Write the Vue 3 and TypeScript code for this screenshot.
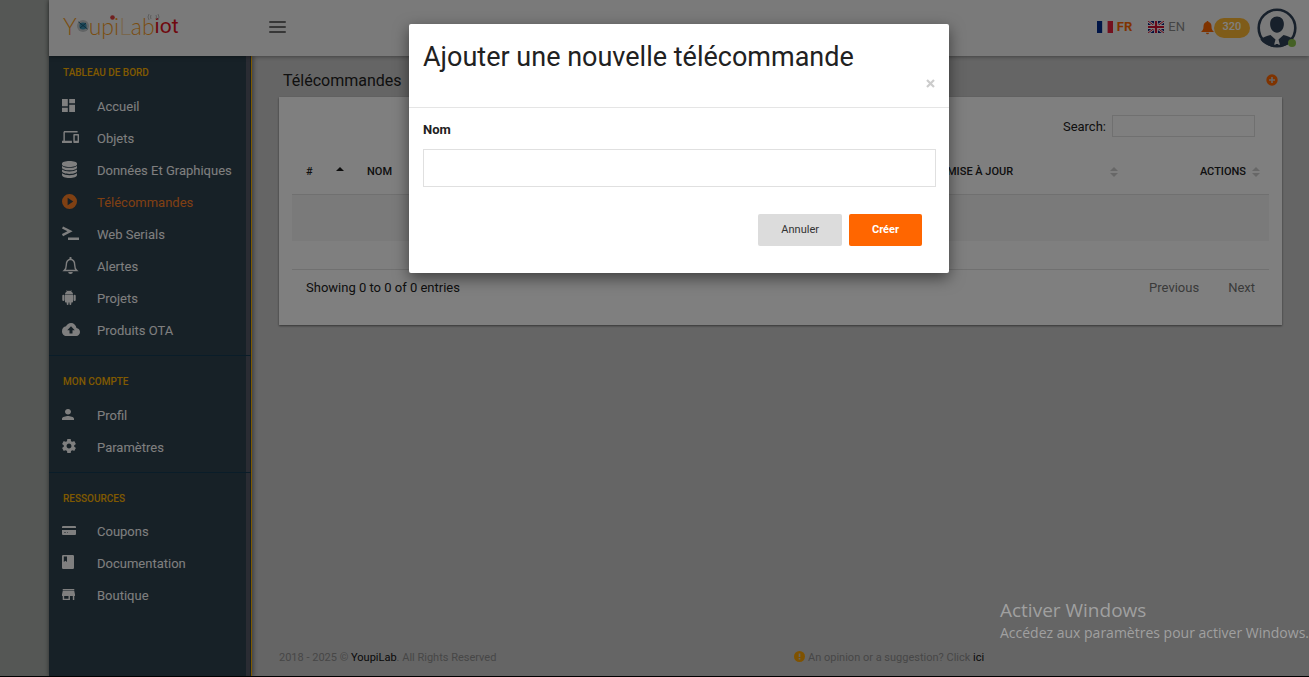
<script setup lang="ts">
import { ref } from 'vue'

interface Shape {
  d: string
  even?: boolean
  line?: number
}
interface Item {
  label: string
  w: number
  h: number
  box: string
  shapes: Shape[]
  active?: boolean
}
interface Section {
  title: string
  items: Item[]
}

const gear =
  'M19.43 12.98c.04-.32.07-.64.07-.98s-.03-.66-.07-.98l2.11-1.65c.19-.15.24-.42.12-.64l-2-3.46c-.12-.22-.39-.3-.61-.22l-2.49 1c-.52-.4-1.08-.73-1.69-.98l-.38-2.65C14.46 2.18 14.25 2 14 2h-4c-.25 0-.46.18-.49.42l-.38 2.65c-.61.25-1.17.59-1.69.98l-2.49-1c-.23-.09-.49 0-.61.22l-2 3.46c-.13.22-.07.49.12.64l2.11 1.65c-.04.32-.07.65-.07.98s.03.66.07.98l-2.11 1.65c-.19.15-.24.42-.12.64l2 3.46c.12.22.39.3.61.22l2.49-1c.52.4 1.08.73 1.69.98l.38 2.65c.03.24.24.42.49.42h4c.25 0 .46-.18.49-.42l.38-2.65c.61-.25 1.17-.59 1.69-.98l2.49 1c.23.09.49 0 .61-.22l2-3.46c.12-.22.07-.49-.12-.64l-2.11-1.65zM12 15.5c-1.93 0-3.5-1.57-3.5-3.5s1.57-3.5 3.5-3.5 3.5 1.57 3.5 3.5-1.57 3.5-3.5 3.5z'

const sections: Section[] = [
  {
    title: 'Tableau de bord',
    items: [
      {
        label: 'Accueil', w: 13, h: 13, box: '3 3 18 18',
        shapes: [{ d: 'M3 13h8V3H3v10zm0 8h8v-6H3v6zm10 0h8V11h-8v10zm0-18v6h8V3h-8z' }],
      },
      {
        label: 'Objets', w: 17, h: 12, box: '0 4 24 16',
        shapes: [{ d: 'M4 6h18V4H4c-1.1 0-2 .9-2 2v11H0v3h14v-3H4V6zm19 2h-6c-.55 0-1 .45-1 1v10c0 .55.45 1 1 1h6c.55 0 1-.45 1-1V9c0-.55-.45-1-1-1zm-1 9h-4v-7h4v7z' }],
      },
      {
        label: 'Données Et Graphiques', w: 15, h: 17, box: '0 0 15 17',
        shapes: [
          { d: 'M7.500 0C11.600 0 15 1.100 15 2.600V3.400C15 4.800 11.600 5.900 7.500 5.900S0 4.800 0 3.400V2.600C0 1.100 3.400 0 7.500 0z' },
          { d: 'M0 5c1.600 1.300 4.400 1.800 7.500 1.800S13.400 6.300 15 5v1.700c0 1.400-3.400 2.600-7.500 2.600S0 8.100 0 6.700z' },
          { d: 'M0 8.600c1.600 1.300 4.400 1.900 7.500 1.900s5.900-.6 7.500-1.900v1.700c0 1.500-3.400 2.600-7.500 2.600S0 11.800 0 10.300z' },
          { d: 'M0 12.300c1.600 1.300 4.400 1.900 7.500 1.900s5.900-.6 7.500-1.900V14c0 1.700-3.400 3-7.500 3S0 15.700 0 14z' },
        ],
      },
      {
        label: 'Télécommandes', w: 15, h: 15, box: '2 2 20 20', active: true,
        shapes: [{ d: 'M12 2a10 10 0 1 0 0 20 10 10 0 0 0 0-20zM9.500 7l7.500 5-7.500 5z', even: true }],
      },
      {
        label: 'Web Serials', w: 17, h: 15, box: '0 0 17 15',
        shapes: [{ d: 'M.5 1.500L8 5.300.5 9.200', line: 2.4 }, { d: 'M6 11.500h11V14H6z' }],
      },
      {
        label: 'Alertes', w: 17, h: 17, box: '0 0 17 17',
        shapes: [
          { d: 'M2.200 13.500c1.700-1.500 2.100-2.900 2.100-5.600 0-3 1.500-5.200 4.200-5.600 2.700.4 4.200 2.600 4.200 5.600 0 2.700.4 4.100 2.100 5.600z', line: 1.4 },
          { d: 'M7.500 2V.8a1 1 0 0 1 2 0V2zM6.200 15h4.600a2.300 2 0 0 1-4.600 0z' },
        ],
      },
      {
        label: 'Projets', w: 14, h: 15, box: '0 0 14 15',
        shapes: [
          { d: 'M3 4.500C3 2.700 4 1.700 5 1.200L4.400.3l.4-.3.700 1a4.500 4.500 0 0 1 3 0l.7-1 .4.3-.6.900c1 .5 2 1.500 2 3.300zM3 5h8v6.500c0 .6-.4 1-1 1H9.300V14a.9.9 0 0 1-1.800 0v-1.500h-1V14a.9.9 0 0 1-1.800 0v-1.500H4c-.6 0-1-.4-1-1zM.3 5.800a1.100 1.100 0 0 1 2.200 0V10a1.100 1.100 0 0 1-2.200 0zM11.500 5.800a1.100 1.100 0 0 1 2.200 0V10a1.100 1.100 0 0 1-2.200 0z' },
        ],
      },
      {
        label: 'Produits OTA', w: 18, h: 13, box: '0 4 24 16',
        shapes: [{ d: 'M19.350 10.040C18.670 6.590 15.640 4 12 4 9.110 4 6.600 5.640 5.350 8.040 2.340 8.360 0 10.910 0 14c0 3.310 2.690 6 6 6h13c2.760 0 5-2.240 5-5 0-2.640-2.050-4.780-4.650-4.960zM14 13v4h-4v-4H7l5-5 5 5h-3z' }],
      },
    ],
  },
  {
    title: 'Mon compte',
    items: [
      {
        label: 'Profil', w: 12, h: 11, box: '4 4 16 16',
        shapes: [{ d: 'M12 12c2.210 0 4-1.790 4-4s-1.790-4-4-4-4 1.790-4 4 1.790 4 4 4zm0 2c-2.670 0-8 1.340-8 4v2h16v-2c0-2.660-5.330-4-8-4z' }],
      },
      { label: 'Paramètres', w: 14, h: 14, box: '2 2 20 20', shapes: [{ d: gear }] },
    ],
  },
  {
    title: 'Ressources',
    items: [
      {
        label: 'Coupons', w: 14, h: 9, box: '0 0 14 9',
        shapes: [{ d: 'M1 0h12a1 1 0 0 1 1 1v1H0V1a1 1 0 0 1 1-1zM0 4h14v4a1 1 0 0 1-1 1H1a1 1 0 0 1-1-1zM2 6.300v.5h2v-.5zm3 0v.5h1v-.5z', even: true }],
      },
      {
        label: 'Documentation', w: 12, h: 14, box: '0 0 12 14',
        shapes: [{ d: 'M1.200 0h9.600A1.200 1.200 0 0 1 12 1.200v11.600a1.200 1.200 0 0 1-1.200 1.200H1.200A1.200 1.200 0 0 1 0 12.800V1.200A1.200 1.200 0 0 1 1.200 0zM1.800 1.500V7l1.600-1.200L5 7V1.500z', even: true }],
      },
      {
        label: 'Boutique', w: 13, h: 11, box: '3 4 18 16',
        shapes: [{ d: 'M20 4H4v2h16V4zm1 10v-2l-1-5H4l-1 5v2h1v6h10v-6h4v6h2v-6h1v0zm-9 4H6v-4h6v4z' }],
      },
    ],
  },
]

const search = ref('')
const name = ref('')
</script>

<template>
  <div class="page">
    <div class="shell">
      <header class="topbar">
        <a class="logo" href="#" aria-label="YoupiLab iot">
          <span>Y</span>
          <svg class="globe" viewBox="0 0 12 12" aria-hidden="true">
            <circle cx="6" cy="6" r="6" fill="#c4c8ca" />
            <circle cx="6" cy="6" r="3.600" fill="#3c93b4" />
            <path d="M1.500 2l9 7M3 8l6-5" stroke="#1c5a78" stroke-width="1" />
          </svg>
          <span>upi</span><span class="pale">L</span><span>ab</span><span class="iot">iot</span>
          <svg class="antenna" viewBox="0 0 50 8" aria-hidden="true">
            <circle cx="2.500" cy="3.500" r="2.300" fill="#e04040" />
            <path d="M39 0q-2 3 0 6M41 1q-1 2 0 4M48 0q2 3 0 6M46 1q1 2 0 4" fill="none" stroke="#bbb" />
          </svg>
        </a>
        <button class="burger" type="button" aria-label="Menu"><i></i><i></i><i></i></button>
        <div class="tools">
          <a class="lang on" href="#">
            <svg width="16" height="12" viewBox="0 0 16 12" aria-hidden="true">
              <path fill="#002b8f" d="M0 0h5.400v12H0z" /><path fill="#fff" d="M5.400 0h5.200v12H5.400z" /><path fill="#e8203c" d="M10.600 0H16v12h-5.400z" />
            </svg>
            <span>FR</span>
          </a>
          <a class="lang" href="#">
            <svg width="16" height="12" viewBox="0 0 16 12" aria-hidden="true">
              <path fill="#0a1f7a" d="M0 0h16v12H0z" />
              <path d="M0 0l16 12M16 0L0 12" stroke="#fff" stroke-width="2.600" />
              <path d="M0 0l16 12M16 0L0 12" stroke="#d01030" stroke-width="1" />
              <path d="M8 0v12M0 6h16" stroke="#fff" stroke-width="4" />
              <path d="M8 0v12M0 6h16" stroke="#d01030" stroke-width="2.200" />
            </svg>
            <span>EN</span>
          </a>
          <a class="alerts" href="#" aria-label="320 notifications">
            <svg width="13" height="14" viewBox="0 0 13 14" aria-hidden="true">
              <path fill="#ff6600" d="M6.500 0c.6 0 1 .4 1 1 2 .5 3 2.100 3 4.200 0 3 .6 4 2.500 5.800H0c1.900-1.800 2.500-2.800 2.500-5.800 0-2.100 1-3.700 3-4.200 0-.6.4-1 1-1zM5 11.800h3a1.500 1.500 0 0 1-3 0z" />
            </svg>
            <span class="count">320</span>
          </a>
          <a class="avatar" href="#" aria-label="Profil utilisateur">
            <svg viewBox="0 0 40 40" aria-hidden="true">
              <circle cx="20" cy="20" r="18.300" fill="none" stroke="#2f4156" stroke-width="2.600" />
              <path fill="#2f4156" d="M20 8.500c4 0 6.900 3 6.900 7.400 0 4.800-3.200 8.800-6.900 8.800s-6.900-4-6.900-8.800c0-4.400 2.900-7.400 6.900-7.400zM13.500 27l5 4.500-2 7.500C11 38 6 35.500 3.300 31.500c2.700-2.500 6.500-3.300 10.200-4.500zM26.500 27l-5 4.500 2 7.500c5.500-1 10.500-3.500 13.200-7.500-2.700-2.500-6.500-3.300-10.200-4.500zM18.800 36h2.400l1 3h-4.400z" />
            </svg>
            <span class="status"></span>
          </a>
        </div>
      </header>

      <div class="body">
        <nav class="sidebar">
          <section v-for="s in sections" :key="s.title">
            <h2>{{ s.title }}</h2>
            <ul>
              <li v-for="it in s.items" :key="it.label">
                <a href="#" :class="{ active: it.active }">
                  <span class="ico">
                    <svg :width="it.w" :height="it.h" :viewBox="it.box" preserveAspectRatio="none" aria-hidden="true">
                      <path
                        v-for="(p, i) in it.shapes"
                        :key="i"
                        :d="p.d"
                        :fill="p.line ? 'none' : 'currentColor'"
                        :fill-rule="p.even ? 'evenodd' : 'nonzero'"
                        :stroke="p.line ? 'currentColor' : 'none'"
                        :stroke-width="p.line"
                      />
                    </svg>
                  </span>
                  <span>{{ it.label }}</span>
                </a>
              </li>
            </ul>
          </section>
        </nav>

        <main class="content">
          <div class="heading">
            <h1>Télécommandes</h1>
            <button class="add" type="button" aria-label="Ajouter">
              <svg width="12" height="12" viewBox="0 0 12 12" aria-hidden="true">
                <circle cx="6" cy="6" r="5.700" fill="#ff6600" />
                <path d="M6 3v6M3 6h6" stroke="#ccc" stroke-width="1.600" />
              </svg>
            </button>
          </div>

          <div class="card">
            <div class="search">
              <label for="search">Search:</label>
              <input id="search" v-model="search" type="search" />
            </div>
            <table>
              <thead>
                <tr>
                  <th class="c-id">
                    <div class="th"><span>#</span>
                      <svg width="8" height="10" viewBox="0 0 8 10" aria-hidden="true"><path fill="#1b1b1b" d="M0 4l4-4 4 4z" /></svg>
                    </div>
                  </th>
                  <th><div class="th"><span>NOM</span></div></th>
                  <th class="c-date">
                    <div class="th"><span>MISE À JOUR</span>
                      <svg width="8" height="10" viewBox="0 0 8 10" aria-hidden="true"><path fill="#cfcfcf" d="M0 4l4-4 4 4zM0 6l4 4 4-4z" /></svg>
                    </div>
                  </th>
                  <th class="c-act">
                    <div class="th end"><span>ACTIONS</span>
                      <svg width="8" height="10" viewBox="0 0 8 10" aria-hidden="true"><path fill="#cfcfcf" d="M0 4l4-4 4 4zM0 6l4 4 4-4z" /></svg>
                    </div>
                  </th>
                </tr>
              </thead>
              <tbody>
                <tr><td colspan="4"></td></tr>
              </tbody>
            </table>
            <div class="pager">
              <span>Showing 0 to 0 of 0 entries</span>
              <div class="links"><a href="#">Previous</a><a href="#">Next</a></div>
            </div>
          </div>

          <footer>
            <p>2018 - 2025 © <a href="#">YoupiLab</a>. All Rights Reserved</p>
            <p class="opinion">
              <svg width="11" height="11" viewBox="0 0 11 11" aria-hidden="true">
                <circle cx="5.500" cy="5.500" r="5.500" fill="#ffa500" />
                <path d="M4.700 2.500h1.600v3.500H4.700zM4.700 7h1.600v1.600H4.700z" fill="#ccc" />
              </svg>
              <span>An opinion or a suggestion? Click <a href="#">ici</a></span>
            </p>
          </footer>
        </main>
      </div>
    </div>

    <div class="backdrop">
      <form class="modal" role="dialog" aria-labelledby="modal-title" @submit.prevent>
        <div class="modal-head">
          <h3 id="modal-title">Ajouter une nouvelle télécommande</h3>
          <button class="close" type="button" aria-label="Fermer">
            <svg width="9" height="9" viewBox="0 0 9 9" aria-hidden="true"><path d="M1 1l7 7M8 1L1 8" stroke="#ccc" stroke-width="2.200" /></svg>
          </button>
        </div>
        <div class="modal-body">
          <label for="name">Nom</label>
          <input id="name" v-model="name" type="text" />
          <div class="actions">
            <button class="btn" type="button">Annuler</button>
            <button class="btn primary" type="submit">Créer</button>
          </div>
        </div>
      </form>
    </div>

    <div class="watermark">
      <p class="wm-title">Activer Windows</p>
      <p>Accédez aux paramètres pour activer Windows.</p>
    </div>
  </div>
</template>

<style>
body {
  margin: 0;
  background: #cbcbcb;
}
</style>

<style scoped>
* {
  box-sizing: border-box;
}
.page {
  position: relative;
  min-height: 100vh;
  padding-left: 49px;
  overflow: hidden;
  display: flex;
  background: #aaafab;
  border-bottom: 1px solid #000;
  font: 13px/20px Roboto, "Liberation Sans", sans-serif;
  color: #212121;
}
a {
  color: inherit;
  text-decoration: none;
}
h1, h2, h3, p, ul {
  margin: 0;
  padding: 0;
  font-weight: 400;
}
button {
  font: inherit;
  padding: 0;
  border: 0;
  background: none;
}
svg {
  display: block;
  flex: none;
}
.shell {
  flex: 1;
  min-width: 0;
  display: flex;
  flex-direction: column;
  background: #cbcbcb;
  box-shadow: 0 0 5px rgba(0, 0, 0, 0.4);
}
.topbar {
  position: relative;
  z-index: 1;
  height: 56px;
  display: flex;
  align-items: center;
  padding: 0 12px 0 14px;
  background: #f5f5f5;
  box-shadow: 0 1px 4px rgba(0, 0, 0, 0.35);
}
.logo {
  position: relative;
  display: flex;
  align-items: center;
  width: 206px;
  height: 56px;
  padding-bottom: 4px;
  font: 300 23px/28px Lato, Roboto, sans-serif;
  color: #f59a1e;
}
.globe {
  width: 12px;
  height: 12px;
}
.pale {
  color: #f2cf9c;
}
.iot {
  font-family: Roboto, sans-serif;
  font-size: 21px;
  font-weight: 400;
  color: #e01020;
}
.antenna {
  position: absolute;
  left: 47px;
  top: 14px;
  width: 50px;
  height: 8px;
}
.burger {
  display: flex;
  flex-direction: column;
  gap: 3px;
  width: 17px;
  padding-bottom: 2px;
}
.burger i {
  height: 2px;
  border-radius: 1px;
  background: #6e6e6e;
}
.tools {
  margin-left: auto;
  display: flex;
  align-items: center;
}
.lang {
  display: flex;
  align-items: center;
  gap: 4px;
  margin-right: 16px;
  padding-bottom: 2px;
  color: #8a8a8a;
}
.lang.on {
  color: #ff6600;
  font-weight: 700;
}
.alerts {
  display: flex;
  align-items: center;
  padding-bottom: 1px;
}
.count {
  width: 36px;
  height: 20px;
  border-radius: 10px;
  background: #ffb833;
  color: #fff;
  font-size: 11px;
  font-weight: 500;
  line-height: 18px;
  text-align: center;
}
.avatar {
  position: relative;
  width: 40px;
  height: 40px;
  margin-left: 7px;
}
.avatar svg {
  width: 40px;
  height: 40px;
}
.status {
  position: absolute;
  right: 1px;
  bottom: 1px;
  width: 8px;
  height: 8px;
  border-radius: 50%;
  background: #8bc34a;
}
.body {
  flex: 1;
  display: flex;
}
.sidebar {
  position: relative;
  width: 203px;
  flex: none;
  background: #2e424e;
  border-right: 1px solid #ffb400;
  box-shadow: inset -1px 0 #2e424e, inset -5px 0 #545866, 2px 0 4px rgba(0, 0, 0, 0.35);
}
.sidebar section {
  padding: 10px 0 8px;
  border-bottom: 1px solid #143a52;
}
.sidebar section:first-child {
  padding-top: 1px;
}
.sidebar section:last-child {
  border-bottom: 0;
}
.sidebar h2 {
  padding-left: 14px;
  margin-bottom: 2px;
  font-size: 10px;
  line-height: 32px;
  font-weight: 500;
  text-transform: uppercase;
  color: #ffb400;
}
.sidebar section:last-child h2 {
  margin-bottom: 1px;
}
.sidebar ul {
  list-style: none;
}
.sidebar li a {
  display: flex;
  align-items: center;
  height: 32px;
  padding-left: 13px;
  color: #fff;
}
.sidebar li a.active {
  color: #ff8126;
}
.ico {
  width: 35px;
  padding-bottom: 4px;
}
.content {
  flex: 1;
  min-width: 0;
  display: flex;
  flex-direction: column;
  padding: 14px 27px 8px;
}
.heading {
  display: flex;
  align-items: center;
  justify-content: space-between;
  padding: 0 4px;
  height: 20px;
  margin-bottom: 7px;
}
.heading h1 {
  padding-top: 2px;
  font-size: 16px;
}
.card {
  padding: 18px 13px 27px;
  background: #fff;
  box-shadow: 0 1px 2px rgba(0, 0, 0, 0.5);
}
.search {
  display: flex;
  align-items: center;
  justify-content: flex-end;
  gap: 6px;
  padding-right: 14px;
}
.search label {
  padding-top: 2px;
}
.search input {
  width: 143px;
  height: 22px;
  border: 1px solid #e0e0e0;
  border-radius: 0;
  outline: 0;
  background: transparent;
}
table {
  width: 100%;
  margin-top: 10px;
  border-collapse: separate;
  border-spacing: 0;
  table-layout: fixed;
}
th {
  height: 48px;
  padding: 2px 9px 0 14px;
  border-bottom: 1px solid #e0e0e0;
  font-size: 11px;
  font-weight: 500;
  text-align: left;
}
.th {
  display: flex;
  align-items: center;
  justify-content: space-between;
}
.th.end {
  justify-content: flex-end;
  gap: 6px;
}
.c-id {
  width: 61px;
}
.c-date {
  width: 194px;
}
.c-act {
  width: 142px;
}
td {
  height: 46px;
  background: #f4f4f4;
}
.pager {
  display: flex;
  justify-content: space-between;
  margin-top: 28px;
  padding: 8px 14px 0;
  border-top: 1px solid #e0e0e0;
}
.links {
  display: flex;
  gap: 29px;
  color: #757575;
}
footer {
  display: flex;
  margin-top: auto;
  font-size: 11px;
  color: #8e8e8e;
}
footer p {
  flex: 0 0 515px;
}
footer a {
  color: #111;
}
footer .opinion {
  display: flex;
  flex: 1;
  align-items: center;
  gap: 3px;
}
.opinion svg {
  margin-bottom: 3px;
}
.backdrop {
  position: absolute;
  inset: 0;
  z-index: 2;
  padding: 24px 0 0 49px;
  background: rgba(0, 0, 0, 0.5);
}
.modal {
  width: 540px;
  max-width: 100%;
  margin: 0 auto;
  border-radius: 2px;
  background: #fff;
  box-shadow: 0 5px 15px rgba(0, 0, 0, 0.5);
}
.modal-head {
  display: flex;
  flex-direction: column;
  padding: 14px 14px 16px;
  border-bottom: 1px solid #e5e5e5;
}
.modal-head h3 {
  font-size: 27px;
  line-height: 38px;
}
.close {
  align-self: flex-end;
  display: flex;
  align-items: center;
  height: 15px;
}
.modal-body {
  display: flex;
  flex-direction: column;
  padding: 12px 13px 27px 14px;
}
.modal-body label {
  margin-bottom: 9px;
  font-weight: 700;
}
.modal-body input {
  height: 38px;
  padding: 0 12px;
  border: 1px solid #e0e0e0;
  border-radius: 0;
  outline: 0;
  font: inherit;
}
.actions {
  display: flex;
  justify-content: flex-end;
  gap: 7px;
  padding: 27px 14px 0 0;
}
.btn {
  height: 32px;
  padding: 0 23px;
  border-radius: 2px;
  background: #dcdcdc;
  color: #333;
  font-size: 11px;
  line-height: 16px;
}
.btn.primary {
  background: #ff6600;
  color: #fff;
  font-weight: 700;
}
.watermark {
  position: absolute;
  right: 0;
  bottom: 32px;
  z-index: 3;
  font: 300 14px/22px "Open Sans", "Noto Sans", sans-serif;
  color: #a0a0a0;
  white-space: nowrap;
}
.wm-title {
  font-size: 19px;
  line-height: 24px;
}
</style>
